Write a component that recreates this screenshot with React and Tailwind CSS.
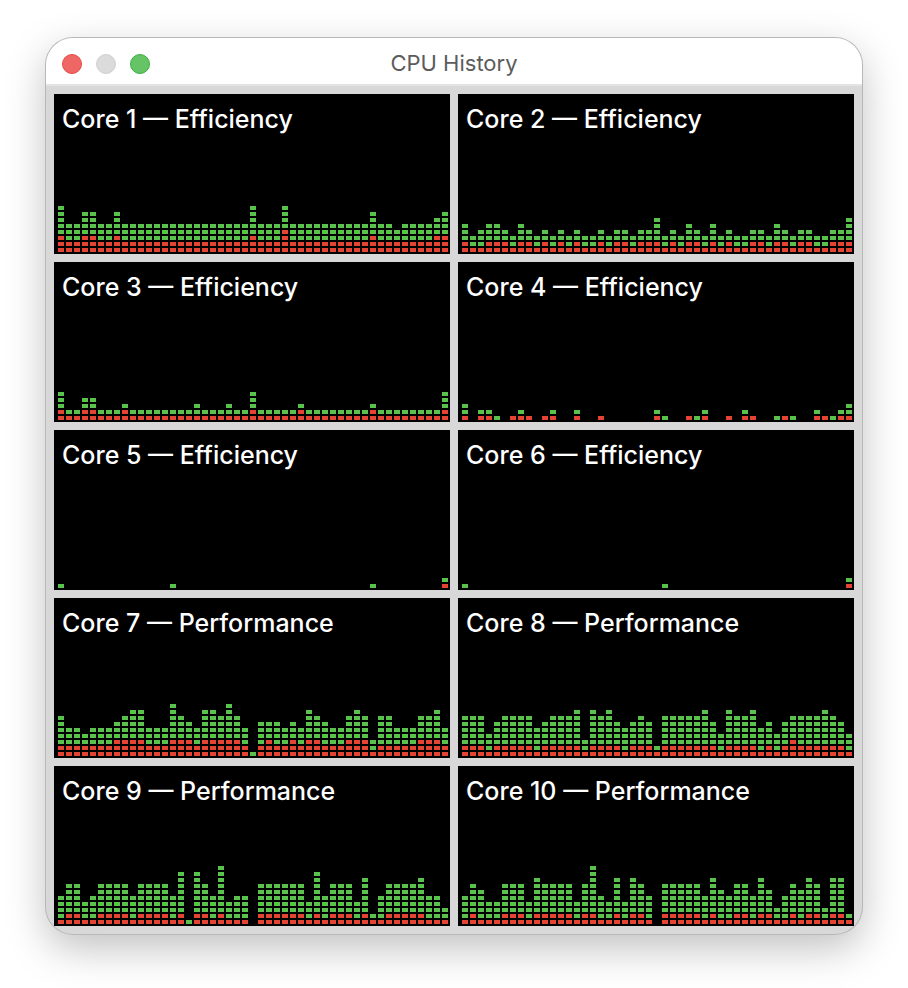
import React from 'react';

const ROWS = 10;

// One character per sample. total = lit cells, system = red cells (a = 10)
const cores = [
  {
    id: 1,
    kind: 'Efficiency',
    total: '8557755755555555555555558555855555555557554555567',
    system: '3223322322222222222222223222422222222223222222233',
  },
  {
    id: 2,
    kind: 'Efficiency',
    total: '5345543543434343343443446343543534334435434433446',
    system: '2112221221212121121221222121221212112212212211222',
  },
  {
    id: 3,
    kind: 'Efficiency',
    total: '5224422232222222232223225222223222222223222222225',
    system: '2112211121111111111111112111112111111112111111112',
  },
  {
    id: 4,
    kind: 'Efficiency',
    total: '3022101210120020010000002100112001021001110021123',
    system: '1011001110110010010000001000101001011000100011011',
  },
  {
    id: 5,
    kind: 'Efficiency',
    total: '1000000000000010000000000000000000000001000000002',
    system: '0000000000000000000000000000000000000000000000001',
  },
  {
    id: 6,
    kind: 'Efficiency',
    total: '1000000000000000000000000100000000000000000000002',
    system: '0000000000000000000000000000000000000000000000001',
  },
  {
    id: 7,
    kind: 'Performance',
    total: '7554555678855597658879751666565876557873775557785',
    system: '2222222333322233323333320232232332223331222223332',
  },
  {
    id: 8,
    kind: 'Performance',
    total: '7774677775677783878656762777778648778564677778764',
    system: '2221222221222221222212221222222212222121232222221',
  },
  {
    id: 9,
    kind: 'Performance',
    total: '57745777757777591975a4550777777495777482577778553',
    system: '1221122221222212022121110222222121222121122222111',
  },
  {
    id: 10,
    kind: 'Performance',
    total: '5764477748777747a54848750777775865775863576873882',
    system: '1211122212222212211212210222221211221221121221221',
  },
];

function History({ total, system }) {
  const cells = [];
  for (let col = 0; col < total.length; col++) {
    const lit = parseInt(total[col], 16);
    const sys = parseInt(system[col], 16);
    for (let row = 0; row < lit; row++) {
      cells.push(
        <rect
          key={`${col}-${row}`}
          x={col * 8}
          y={(ROWS - row - 1) * 6}
          width="6"
          height="4"
          className={row < sys ? 'fill-[#e54435]' : 'fill-[#5ac14d]'}
        />
      );
    }
  }
  return (
    <svg width="390" height="60" viewBox="0 0 390 60" shapeRendering="crispEdges" aria-hidden="true" className="shrink-0">
      {cells}
    </svg>
  );
}

function CorePanel({ core }) {
  return (
    <section className="flex h-40 min-w-0 flex-col justify-between overflow-hidden bg-black pl-1">
      <h2 className="pt-2 pl-1 text-[25px] leading-[34px] font-medium whitespace-nowrap text-white">
        Core {core.id} — {core.kind}
      </h2>
      <History total={core.total} system={core.system} />
    </section>
  );
}

export default function App() {
  return (
    <div className="min-h-screen bg-white px-[46px] pt-[38px] pb-[54px] font-['Inter',sans-serif]">
      <main className="overflow-hidden rounded-[27px] bg-[#d8d8d8] shadow-[0_0_0_1px_#b8b8b8,0_14px_40px_rgba(0,0,0,0.25)]">
        {/* Title bar */}
        <header className="grid h-12 grid-cols-[1fr_auto_1fr] items-center border-b-2 border-[#e4e4e4] bg-white px-4">
          <div className="flex gap-3.5 pt-1.5">
            <button type="button" aria-label="Close" className="size-5 rounded-full border border-[#e5484a] bg-[#ee6765]" />
            <button type="button" aria-label="Minimize" disabled className="size-5 rounded-full border border-[#cfcfcf] bg-[#dbdbdb]" />
            <button type="button" aria-label="Zoom" className="size-5 rounded-full border border-[#3cae40] bg-[#66c466]" />
          </div>
          <h1 className="pt-1 text-[22px] leading-8 text-[#5c5c5c]">CPU History</h1>
        </header>

        {/* Core graphs */}
        <div className="grid grid-cols-2 gap-2 p-2">
          {cores.map((core) => (
            <CorePanel key={core.id} core={core} />
          ))}
        </div>
      </main>
    </div>
  );
}
